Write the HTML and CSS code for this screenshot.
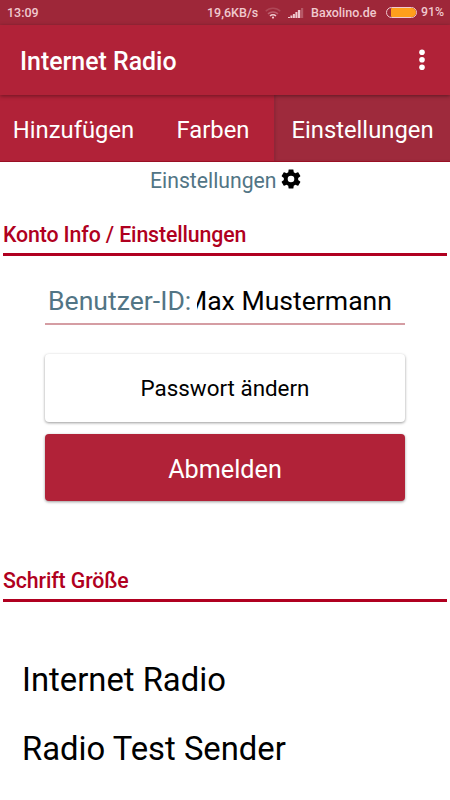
FILE: index.html
```html
<!DOCTYPE html>
<html lang="de">
<head>
<meta charset="utf-8">
<title>Internet Radio</title>
<link rel="stylesheet" href="styles.css">
</head>
<body>
<div class="status">
  <span class="clock">13:09</span>
  <span class="speed">19,6KB/s</span>
  <svg class="wifi" width="16" height="12" viewBox="0 0 16 12" fill="none" stroke="#f0c9cf" stroke-width="1.5">
    <path d="M.7 4.3a10.5 10.5 0 0 1 14.6 0" opacity=".2"/>
    <path d="M3 6.9a7.2 7.2 0 0 1 10 0" opacity=".35"/>
    <path d="M5 9a4.4 4.4 0 0 1 6 0"/>
    <circle cx="8" cy="10.6" r="1.1" fill="#f0c9cf" stroke="none"/>
  </svg>
  <svg class="signal" width="16" height="11" viewBox="0 0 16 11" fill="#f0c9cf">
    <path d="M0 10h2v1H0zM2.4 8.5h2V11h-2zM4.9 7h2v4h-2zM7.4 5h2v6h-2zM9.9 3h2.4v8H9.9z"/>
    <path d="M13 1h2.2v10H13z" opacity=".3"/>
  </svg>
  <span class="carrier">Baxolino.de</span>
  <span class="battery"><span class="charge"></span></span>
  <span class="percent">91%</span>
</div>
<header class="appbar">
  <h1>Internet Radio</h1>
  <svg width="6" height="22" viewBox="0 0 6 22" fill="#fff"><circle cx="3" cy="3.3" r="2.8"/><circle cx="3" cy="10.8" r="2.8"/><circle cx="3" cy="18.3" r="2.8"/></svg>
</header>
<nav class="tabs">
  <a class="tab add">Hinzufügen</a>
  <a class="tab colors">Farben</a>
  <a class="tab active">Einstellungen</a>
</nav>
<main>
  <div class="page-title">
    <span>Einstellungen</span>
    <svg width="20" height="20" viewBox="2 2 20 20"><path d="M19.14 12.94c.04-.3.06-.61.06-.94 0-.32-.02-.64-.07-.94l2.03-1.58c.18-.14.23-.41.12-.61l-1.92-3.32c-.12-.22-.37-.29-.59-.22l-2.39.96c-.5-.38-1.03-.7-1.62-.94L14.4 2.81c-.04-.24-.24-.41-.48-.41h-3.84c-.24 0-.43.17-.47.41l-.36 2.54c-.59.24-1.13.57-1.62.94l-2.39-.96c-.22-.08-.47 0-.59.22L2.74 8.87c-.12.21-.08.47.12.61l2.03 1.58c-.05.3-.09.63-.09.94s.02.64.07.94l-2.03 1.58c-.18.14-.23.41-.12.61l1.92 3.32c.12.22.37.29.59.22l2.39-.96c.5.38 1.03.7 1.62.94l.36 2.54c.05.24.24.41.48.41h3.84c.24 0 .44-.17.47-.41l.36-2.54c.59-.24 1.13-.56 1.62-.94l2.39.96c.22.08.47 0 .59-.22l1.92-3.32c.12-.22.07-.47-.12-.61l-2.01-1.58zM12 15.3a3.3 3.3 0 1 1 0-6.6 3.3 3.3 0 0 1 0 6.6z"/></svg>
  </div>
  <h2>Konto Info / Einstellungen</h2>
  <section class="account">
    <div class="field">
      <label>Benutzer-ID:</label>
      <div class="value"><span>Max Mustermann</span></div>
    </div>
    <button class="password">Passwort ändern</button>
    <button class="logout">Abmelden</button>
  </section>
  <h2>Schrift Größe</h2>
  <section class="preview">
    <p>Internet Radio</p>
    <p>Radio Test Sender</p>
  </section>
</main>
</body>
</html>
```
FILE: styles.css
```css
* { box-sizing: border-box; }
body {
  margin: 0;
  height: 800px;
  overflow: hidden;
  background: #fff;
  color: #000;
  font-family: Roboto, sans-serif;
}
h1, h2, p { margin: 0; }
svg { display: block; flex: none; }

.status {
  display: flex;
  align-items: center;
  height: 25px;
  padding: 0 7px;
  background: #9e2739;
  color: #f0c9cf;
  font-size: 12.5px;
  font-weight: 500;
  line-height: 25px;
  white-space: nowrap;
}
.clock { width: 200px; flex: none; }
.speed { width: 58px; flex: none; }
.wifi { margin-right: 7px; }
.signal { margin-right: 7px; }
.carrier { width: 75px; flex: none; }
.battery {
  flex: none;
  width: 31px;
  height: 11px;
  padding: 0 0 0 4px;
  border: 1px solid #f0c9cf;
  border-radius: 6px;
}
.charge {
  display: block;
  height: 9px;
  background: #ff9f1c;
  border-radius: 1px 5px 5px 1px;
}
.percent { margin-left: 4px; font-size: 12.3px; }

.appbar {
  position: relative;
  display: flex;
  align-items: center;
  justify-content: space-between;
  height: 70px;
  padding: 3px 25px 0 20px;
  background: #b12238;
  box-shadow: 0 1px 4px rgba(0, 0, 0, .4);
  color: #fff;
}
.appbar svg { margin-top: -3px; }
h1 { font-size: 24.9px; font-weight: 500; line-height: 30px; }

.tabs {
  display: flex;
  height: 67px;
  background: #b12238;
  border-bottom: 1px solid #990f24;
  color: #fff;
  font-size: 23.8px;
  line-height: 70px;
}
.tab { text-align: center; }
.add { width: 147px; }
.colors { width: 127px; padding-left: 5px; }
.active { width: 176px; padding-left: 1px; background: #9e2a3c; box-shadow: inset 2px 0 2px #8f2638; }

.page-title {
  display: flex;
  height: 60px;
  padding: 8px 0 0 150px;
  color: #527585;
  font-size: 21.2px;
  line-height: 22px;
}
.page-title svg { margin: -1px 0 0 4px; fill: #000; }
h2 {
  height: 34px;
  margin: 0 3px;
  border-bottom: 3px solid #b00020;
  color: #b00020;
  font-size: 21.3px;
  font-weight: 500;
  letter-spacing: -.12px;
  line-height: 25px;
}

.account {
  display: flex;
  flex-direction: column;
  height: 312px;
  padding: 20px 45px 0;
}
.field {
  display: flex;
  height: 49px;
  border-bottom: 2px solid #d59da3;
  font-size: 26.6px;
  line-height: 50px;
  white-space: nowrap;
}
label { width: 152px; padding-left: 3px; color: #527585; }
.value {
  display: flex;
  justify-content: flex-end;
  width: 195px;
  overflow: hidden;
}
button {
  display: block;
  padding: 0;
  border: 0;
  border-radius: 4px;
  box-shadow: 0 1px 3px rgba(0, 0, 0, .4);
  font-family: inherit;
}
.password {
  height: 68px;
  margin-top: 29px;
  background: #fff;
  color: #000;
  font-size: 22.4px;
}
.logout {
  height: 67px;
  margin-top: 12px;
  padding-top: 3px;
  background: #b12238;
  color: #fff;
  font-size: 25.2px;
}
.preview { padding: 44px 22px 0; }
.preview p { font-size: 32.8px; line-height: 69px; }
```
